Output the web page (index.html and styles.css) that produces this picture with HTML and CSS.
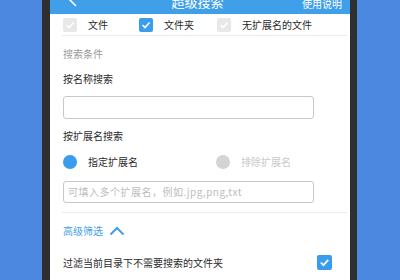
FILE: index.html
```html
<!DOCTYPE html>
<html lang="zh">
<head>
<meta charset="utf-8">
<link rel="stylesheet" href="styles.css">
</head>
<body>
<div class="device">
  <div class="screen">
    <div class="header">
      <div class="back"><svg width="10" height="12" viewBox="0 0 10 12"><polyline points="8,-2 2,4 8,10" fill="none" stroke="#fff" stroke-width="1.6"/></svg></div>
      <div class="title">超级搜索</div>
      <div class="help">使用说明</div>
    </div>
    <div class="types">
      <label class="type"><span class="cb cb-off"><svg width="14" height="14" viewBox="0 0 14 14"><polyline points="3.5,7 6,9.5 10.5,4.5" fill="none" stroke="#fff" stroke-width="1.6"/></svg></span>文件</label>
      <label class="type type-2"><span class="cb cb-on"><svg width="14" height="14" viewBox="0 0 14 14"><polyline points="3.5,7 6,9.5 10.5,4.5" fill="none" stroke="#fff" stroke-width="1.6"/></svg></span>文件夹</label>
      <label class="type type-3"><span class="cb cb-off"><svg width="14" height="14" viewBox="0 0 14 14"><polyline points="3.5,7 6,9.5 10.5,4.5" fill="none" stroke="#fff" stroke-width="1.6"/></svg></span>无扩展名的文件</label>
    </div>
    <div class="divider"></div>
    <div class="section">
      <div class="caption">搜索条件</div>
      <div class="label">按名称搜索</div>
      <div class="input"></div>
      <div class="label">按扩展名搜索</div>
      <div class="radios">
        <div class="radio"><span class="dot dot-on"></span>指定扩展名</div>
        <div class="radio radio-off"><span class="dot dot-off"></span>排除扩展名</div>
      </div>
      <div class="input input-2"><span class="placeholder">可填入多个扩展名，例如.jpg,png,txt</span></div>
    </div>
    <div class="divider"></div>
    <div class="section">
      <div class="advanced">高级筛选<svg width="16" height="10" viewBox="0 0 16 10"><polyline points="1.5,8.5 8,2 14.5,8.5" fill="none" stroke="#3f9fe8" stroke-width="2"/></svg></div>
      <div class="filter"><span>过滤当前目录下不需要搜索的文件夹</span><span class="cb cb-on"><svg width="15" height="15" viewBox="0 0 14 14"><polyline points="3.5,7 6,9.5 10.5,4.5" fill="none" stroke="#fff" stroke-width="1.6"/></svg></span></div>
    </div>
  </div>
</div>
</body>
</html>
```

FILE: styles.css
```css
html, body {
  margin: 0;
  padding: 0;
}
body {
  background: #4c87e0;
  width: 400px;
  height: 280px;
  overflow: hidden;
  font-family: "Noto Sans CJK SC", "Noto Sans", sans-serif;
}
.device {
  margin-left: 42px;
  width: 300px;
  height: 280px;
  background: #2f2f2f;
  padding: 0 7px 0 8px;
}
.screen {
  background: #fff;
  width: 300px;
  height: 280px;
  overflow: hidden;
}
.header {
  height: 14px;
  background: #3f9fe8;
  display: grid;
  grid-template-columns: 1fr auto 1fr;
  grid-template-rows: 14px;
  align-items: end;
  color: #fff;
  overflow: hidden;
}
.back {
  padding-left: 18px;
  height: 12px;
  margin-bottom: 6px;
  line-height: 0;
}
.title {
  font-size: 13px;
  line-height: 13px;
  padding-right: 5px;
  margin-bottom: 6px;
}
.help {
  justify-self: end;
  padding-right: 8px;
  font-size: 10px;
  line-height: 12px;
  margin-bottom: 4px;
}
.types {
  display: flex;
  align-items: center;
  height: 21px;
  padding-left: 13px;
  font-size: 10px;
  color: #2a2a2a;
}
.type {
  display: flex;
  align-items: center;
  width: 76px;
  flex: none;
  white-space: nowrap;
}
.type-2 {
  width: 78px;
}
.type-3 {
  width: auto;
}
.cb {
  width: 14px;
  height: 14px;
  border-radius: 2px;
  margin-right: 11px;
  line-height: 0;
  flex: none;
}
.cb-off {
  background: #e8e8e8;
}
.cb-on {
  background: #3a9cec;
}
.divider {
  height: 1px;
  background: #ececec;
  margin: 0 3px 0 12px;
}
.section {
  padding-left: 13px;
  font-size: 10px;
  line-height: 14px;
}
.caption {
  color: #9a9a9a;
  margin-top: 11px;
}
.label {
  color: #2a2a2a;
  margin-top: 11px;
}
.input {
  margin-top: 10px;
  width: 249px;
  height: 21px;
  border: 1px solid #c8c8c8;
  border-radius: 3px;
  margin-bottom: -1px;
}
.input-2 {
  margin-top: 12px;
  height: 20px;
  display: flex;
  align-items: center;
}
.placeholder {
  color: #bdbdbd;
  padding-left: 4px;
  letter-spacing: 0.5px;
  white-space: nowrap;
}
.radios {
  display: flex;
  align-items: center;
  margin-top: 12px;
  height: 14px;
  color: #2a2a2a;
}
.radio {
  display: flex;
  align-items: center;
  width: 153px;
  flex: none;
  white-space: nowrap;
}
.radio-off {
  color: #c9c9c9;
  width: auto;
}
.dot {
  width: 14px;
  height: 14px;
  border-radius: 50%;
  margin-right: 11px;
}
.dot-on {
  background: #3a9cec;
}
.dot-off {
  background: #d4d4d4;
}
.section + .divider {
  margin-top: 10px;
}
.advanced {
  margin-top: 11px;
  color: #3f9fe8;
  display: flex;
  align-items: center;
  gap: 6px;
}
.filter {
  margin-top: 17px;
  display: flex;
  align-items: center;
  justify-content: space-between;
  width: 269px;
  color: #2a2a2a;
}
.filter .cb {
  width: 15px;
  height: 15px;
  margin-right: 0;
}
```
